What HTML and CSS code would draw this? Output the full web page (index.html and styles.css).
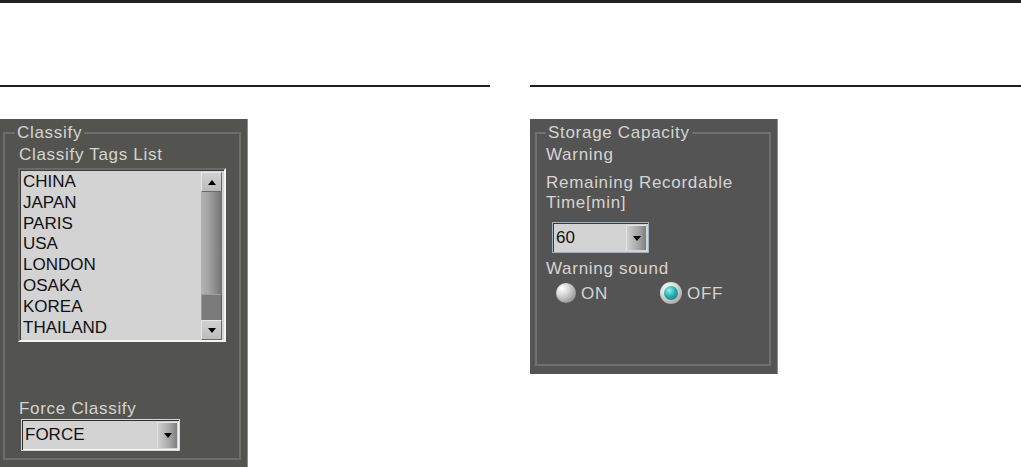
FILE: index.html
```html
<!DOCTYPE html>
<html>
<head>
<meta charset="utf-8">
<link rel="stylesheet" href="styles.css">
</head>
<body>
<div class="topbar"></div>
<div class="rules">
  <div class="rule rule-left"></div>
  <div class="rule rule-right"></div>
</div>
<div class="panels">
  <div class="panel panel-left">
    <fieldset class="group group-left">
      <legend>Classify</legend>
      <div class="label first">Classify Tags List</div>
      <div class="listbox">
        <ul class="items">
          <li>CHINA</li>
          <li>JAPAN</li>
          <li>PARIS</li>
          <li>USA</li>
          <li>LONDON</li>
          <li>OSAKA</li>
          <li>KOREA</li>
          <li>THAILAND</li>
        </ul>
        <div class="scrollbar">
          <div class="sbtn"><span class="tri up"></span></div>
          <div class="track"><div class="thumb"></div></div>
          <div class="sbtn"><span class="tri down"></span></div>
        </div>
      </div>
      <div class="label force-label">Force Classify</div>
      <div class="combo combo-force">
        <span class="value">FORCE</span>
        <span class="arrow"><span class="tri down"></span></span>
      </div>
    </fieldset>
  </div>
  <div class="panel panel-right">
    <fieldset class="group group-right">
      <legend>Storage Capacity</legend>
      <div class="label first">Warning</div>
      <div class="label remaining">Remaining Recordable<br>Time[min]</div>
      <div class="combo combo-time">
        <span class="value">60</span>
        <span class="arrow"><span class="tri down"></span></span>
      </div>
      <div class="label sound">Warning sound</div>
      <div class="radios">
        <label class="radio"><span class="dot off-dot"></span><span class="rtext">ON</span></label>
        <label class="radio"><span class="dot on-dot"><span class="core"></span></span><span class="rtext">OFF</span></label>
      </div>
    </fieldset>
  </div>
</div>
</body>
</html>
```

FILE: styles.css
```css
html, body {
  margin: 0;
  padding: 0;
  background: #ffffff;
  overflow: hidden;
}
body {
  font-family: "Liberation Sans", Arial, sans-serif;
  width: 1021px;
  height: 467px;
}
.topbar {
  height: 3px;
  background: #231f20;
}
.rules {
  display: flex;
  margin-top: 82px;
  gap: 40px;
}
.rule {
  height: 2px;
  background: #231f20;
}
.rule-left { width: 490px; }
.rule-right { flex: 1; }

.panels {
  display: flex;
  gap: 282px;
  margin-top: 32px;
  align-items: flex-start;
}
.panel {
  width: 247px;
  border-right: 1px solid #8e8f8b;
  display: flex;
  flex-direction: column;
}
.panel-left {
  height: 348px;
  background: #535450;
}
.panel-right {
  height: 255px;
  background: #545454;
}
.group {
  flex: 1;
  min-width: 0;
  border: 2px solid #6e6f6b;
  padding: 0;
  margin: 4px 6px 7px 3px;
}
.group-right {
  margin: 4px 6px 8px 5px;
  border-color: #707070;
  padding-left: 9px;
}
.group-left {
  padding-left: 14px;
}
legend {
  font-size: 17px;
  line-height: 20px;
  letter-spacing: 0.7px;
  color: #d4d4d2;
  padding: 0 2px;
}
.group-left legend { margin-left: -4px; }
.group-right legend { margin-left: 0; }

.label {
  font-size: 17px;
  line-height: 20px;
  letter-spacing: 0.7px;
  color: #d4d4d2;
}
.label.first { margin-top: 2px; }

/* list box */
.listbox {
  display: flex;
  width: 204px;
  height: 170px;
  margin-top: 3px;
  margin-left: -1px;
  background: #d3d3d3;
  border: 2px solid;
  border-color: #6a6a68 #f4f4f4 #f4f4f4 #6a6a68;
  box-shadow: inset 1px 1px 0 #3c3c3c;
}
.items {
  list-style: none;
  margin: 0;
  padding: 2px 0 0 3px;
  flex: 1;
}
.items li {
  font-size: 17px;
  line-height: 20.8px;
  color: #111;
}
.scrollbar {
  width: 21px;
  margin: 2px 2px 0 0;
  display: flex;
  flex-direction: column;
}
.sbtn {
  background: linear-gradient(to bottom, #d0d0d0, #bcbcbc);
  border-top: 1px solid #e6e6e6;
  border-left: 1px solid #e6e6e6;
  border-right: 1px solid #6a6a6a;
  border-bottom: 1px solid #6a6a6a;
  box-sizing: border-box;
  height: 20px;
  display: flex;
  align-items: center;
  justify-content: center;
}
.track {
  flex: 1;
  display: flex;
  flex-direction: column;
  justify-content: flex-end;
  background: linear-gradient(to right, #b2b2b2 0%, #a4a4a4 35%, #8a8a8a 70%, #727272 100%);
}
.thumb {
  height: 26px;
  background: #7b7b7b;
  border-top: 1px solid #9a9a9a;
  border-left: 1px solid #9a9a9a;
  border-right: 1px solid #5c5c5c;
  box-sizing: border-box;
}
.tri {
  width: 0;
  height: 0;
  border-left: 4px solid transparent;
  border-right: 4px solid transparent;
}
.tri.up { border-bottom: 5px solid #000; }
.tri.down { border-top: 5px solid #000; }

.force-label { margin-top: 57px; }

/* combo boxes */
.combo {
  display: flex;
  align-items: center;
  box-sizing: border-box;
  background: #d3d3d3;
}
.combo .value {
  flex: 1;
  font-size: 17px;
  color: #111;
}
.combo .arrow {
  width: 20px;
  align-self: stretch;
  background: linear-gradient(to right, #cfcfcf, #a6a6a6 60%, #7e7e7e);
  border-top: 1px solid #e2e2e2;
  border-left: 1px solid #e2e2e2;
  display: flex;
  align-items: center;
  justify-content: center;
  box-sizing: border-box;
}
.combo-force {
  width: 159px;
  height: 32px;
  margin-left: 2px;
  border: 1px solid #d6d6d6;
  box-shadow: inset 1px 1px 0 #2e2e2e, inset -1px -1px 0 #f6f6f6;
  padding: 2px 2px 2px 3px;
}
.combo-time {
  width: 97px;
  height: 31px;
  margin-top: 9px;
  margin-left: 6px;
  border: 1px solid #9fb2c6;
  box-shadow: inset 1px 1px 0 #3a3a3a;
  padding: 2px 2px 2px 3px;
}

.remaining { margin-top: 8px; }
.sound { margin-top: 6px; }

.radios {
  display: grid;
  grid-template-columns: 104px auto;
  margin-top: 3px;
  margin-left: 10px;
  height: 22px;
  align-items: center;
}
.radio {
  display: flex;
  align-items: center;
  gap: 5px;
}
.rtext {
  font-size: 17px;
  letter-spacing: 0.7px;
  color: #d4d4d2;
  line-height: 20px;
  padding-top: 2px;
}
.dot {
  width: 20px;
  height: 20px;
  border-radius: 50%;
  display: flex;
  align-items: center;
  justify-content: center;
}
.off-dot {
  background: radial-gradient(circle at 30% 28%, #ffffff 0%, #dcdcdc 30%, #a8a8a8 65%, #7c7c7c 100%);
}
.on-dot {
  width: 22px;
  height: 22px;
  background: radial-gradient(circle at 35% 30%, #ffffff 0%, #d8d8d8 40%, #8c8c8c 100%);
}
.core {
  width: 14px;
  height: 14px;
  border-radius: 50%;
  background: radial-gradient(circle at 38% 32%, #9af0ee 0%, #22b0b0 45%, #0b6f72 100%);
}
```
